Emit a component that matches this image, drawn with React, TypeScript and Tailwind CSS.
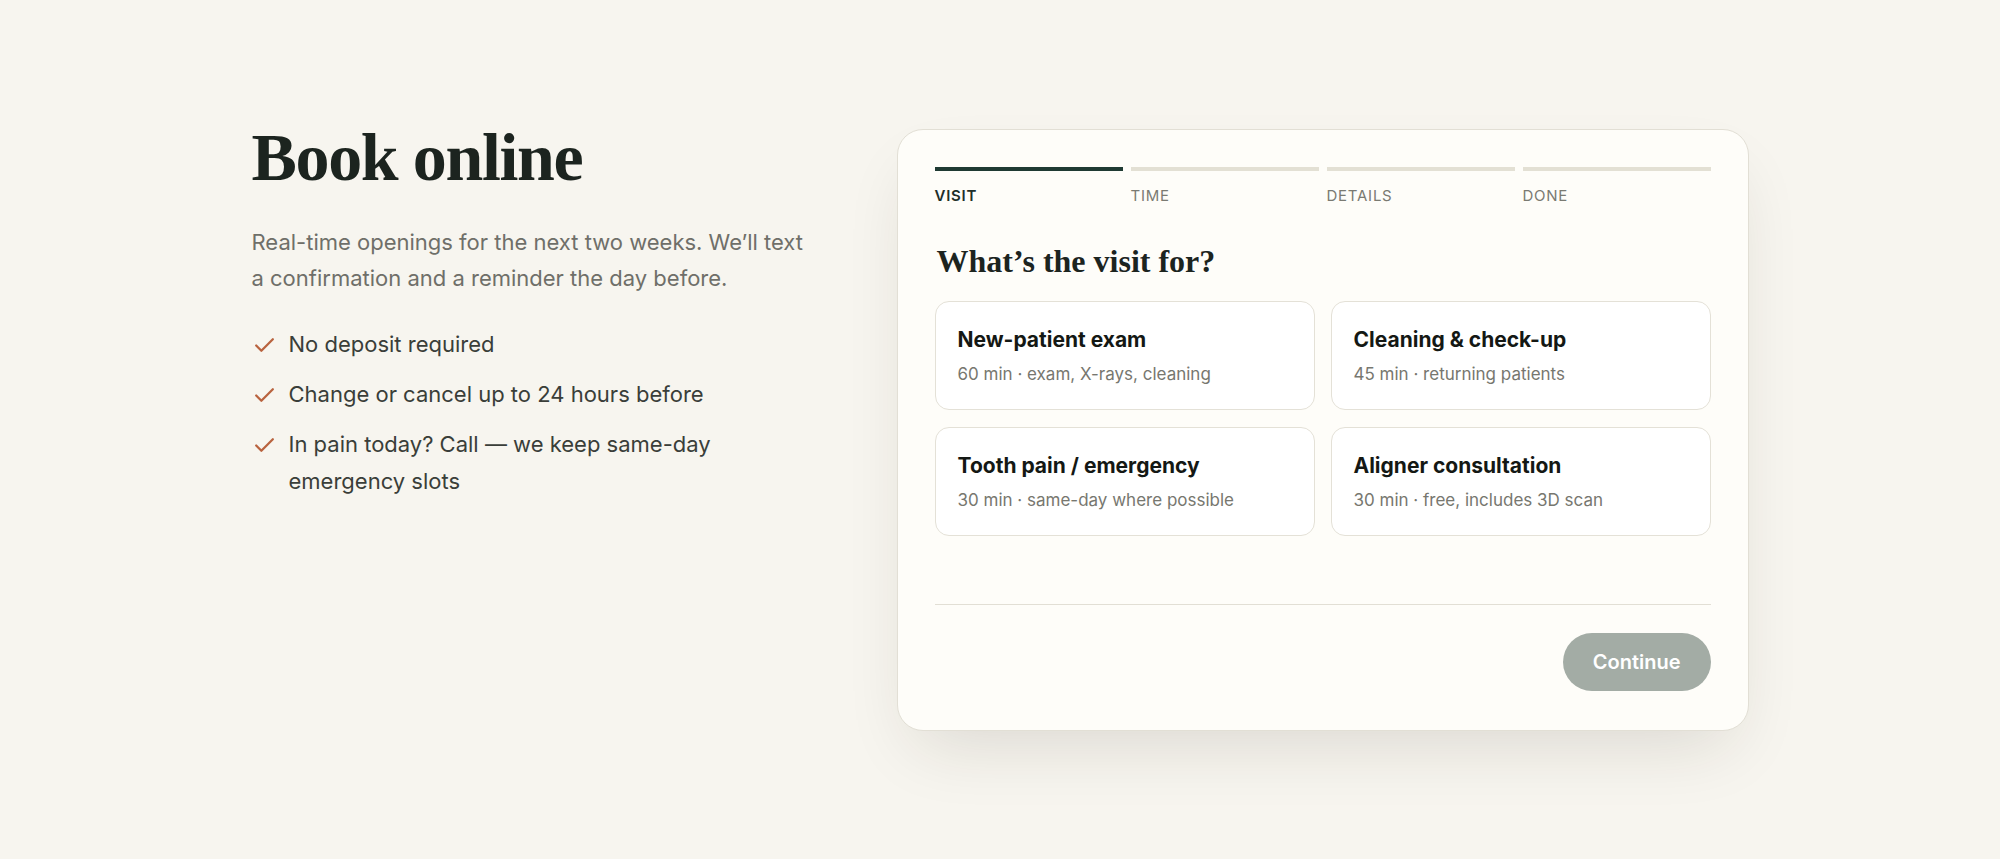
import React from 'react';
import { Check } from 'lucide-react';

const perks = [
  'No deposit required',
  'Change or cancel up to 24 hours before',
  'In pain today? Call — we keep same-day emergency slots',
];

const steps = ['Visit', 'Time', 'Details', 'Done'];

const visits = [
  { title: 'New-patient exam', meta: '60 min · exam, X-rays, cleaning' },
  { title: 'Cleaning & check-up', meta: '45 min · returning patients' },
  { title: 'Tooth pain / emergency', meta: '30 min · same-day where possible' },
  { title: 'Aligner consultation', meta: '30 min · free, includes 3D scan' },
];

const serif = "font-['Liberation_Serif',Georgia,serif]";

export default function App() {
  return (
    <div className="min-h-screen bg-[#f7f5ef] font-['Inter',sans-serif] text-[#1c2420]">
      <section className="mx-auto flex w-[1497px] items-start justify-between pt-[120px]">
        <div className="w-[580px]">
          <h1 className={`${serif} text-[68px] font-bold leading-[75px] tracking-[-0.02em] text-[#1c241f]`}>
            Book online
          </h1>
          <p className="mt-[29px] w-[562px] text-[22px] leading-[36px] text-[#6f6f69]">
            Real-time openings for the next two weeks. We’ll text a confirmation and a reminder the day before.
          </p>
          <ul className="mt-[30px] flex w-[470px] flex-col gap-[13px]">
            {perks.map((p) => (
              <li key={p} className="flex items-start gap-[12px] text-[22px] leading-[37px] text-[#3a3e39]">
                <Check className="mt-[7px] h-[25px] w-[25px] shrink-0 text-[#b9633f]" strokeWidth={2.2} />
                <span>{p}</span>
              </li>
            ))}
          </ul>
        </div>

        <div className="mt-[9px] w-[852px] rounded-[26px] border border-[#e2dfd5] bg-[#fefdf9] px-[37px] pt-[37px] pb-[39px] shadow-[0_30px_70px_-20px_rgba(40,35,20,0.14)]">
          <div className="grid grid-cols-4 gap-[8px]">
            {steps.map((s, i) => (
              <div key={s}>
                <div className={`h-[4px] ${i === 0 ? 'bg-[#1f3a33]' : 'bg-[#e3e0d4]'}`} />
                <div
                  className={`mt-[16px] text-[15px] uppercase leading-[18px] tracking-[0.05em] ${
                    i === 0 ? 'font-semibold text-[#1f2f2a]' : 'text-[#7a7a72]'
                  }`}
                >
                  {s}
                </div>
              </div>
            ))}
          </div>

          <h2 className={`${serif} mt-[38px] pl-[2px] text-[32px] font-bold leading-[36px] text-[#1c241f]`}>
            What’s the visit for?
          </h2>

          <div className="mt-[22px] grid grid-cols-2 gap-x-[16px] gap-y-[17px]">
            {visits.map((v) => (
              <button
                key={v.title}
                className="flex h-[109px] flex-col justify-center rounded-[14px] border border-[#e4e1d7] bg-white px-[22px] text-left"
              >
                <span className="text-[21px] font-bold leading-[28px] text-[#141814]">{v.title}</span>
                <span className="mt-[9px] text-[17px] leading-[22px] text-[#77776f]">{v.meta}</span>
              </button>
            ))}
          </div>

          <div className="mt-[68px] h-px bg-[#e2dfd5]" />

          <div className="mt-[28px] flex justify-end">
            <button className="h-[58px] rounded-full bg-[#a3aca5] px-[30px] text-[20px] font-semibold text-white">
              Continue
            </button>
          </div>
        </div>
      </section>
    </div>
  );
}
